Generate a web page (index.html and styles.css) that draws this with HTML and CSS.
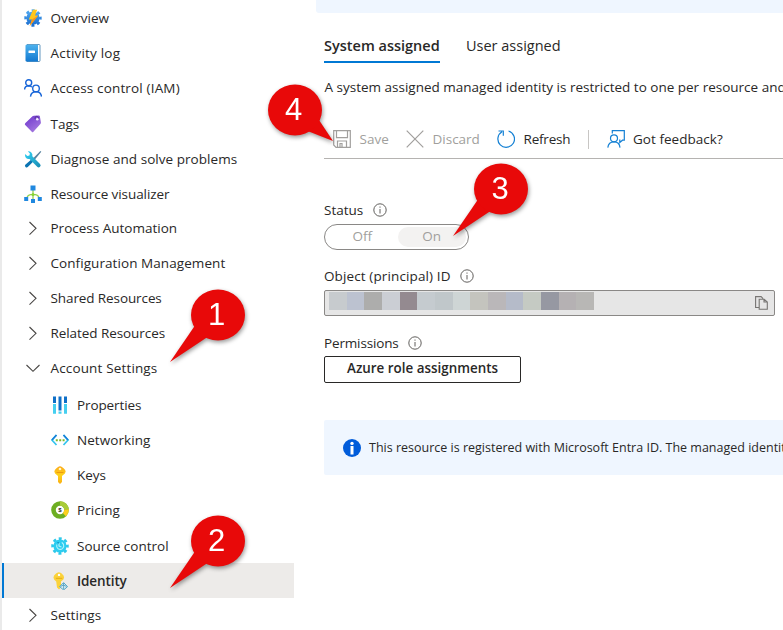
FILE: index.html
```html
<!DOCTYPE html>
<html lang="en">
<head>
<meta charset="utf-8">
<title>Identity</title>
<link rel="stylesheet" href="styles.css">
</head>
<body>
<div class="page">
<nav class="sidebar">
  <ul class="menu">
    <li class="item"><svg class="icon" viewBox="0 0 18 18"><defs><linearGradient id="gear" x1="0" y1="0" x2="0" y2="1"><stop offset="0" stop-color="#4fa8f0"/><stop offset="1" stop-color="#1c6fd0"/></linearGradient></defs><circle cx="9" cy="9" r="7.4" fill="none" stroke="url(#gear)" stroke-width="2.6" stroke-dasharray="3 2.81" stroke-dashoffset="1.5"/><circle cx="9" cy="9" r="6.6" fill="url(#gear)"/><path d="M9 .8h4.2L11 6.4h3.2L5.6 17.2 8 10.400H4.800z" fill="#ffc61a"/><path d="M8 10.400 14.200 6.400 5.600 17.200z" fill="#f9921c"/></svg><span class="t1">Overview</span></li>
    <li class="item"><svg class="icon" viewBox="0 0 18 18"><defs><linearGradient id="book" x1="0" y1="0" x2="0" y2="1"><stop offset="0" stop-color="#4cb2ee"/><stop offset="1" stop-color="#1278d0"/></linearGradient></defs><path d="M3 .5h12q1 0 1 1v15q0 1-1 1H3z" fill="#fff" stroke="#3d7fae" stroke-width=".8"/><path d="M2.500.7H14v16.800H2.500q-1 0-1-1V1.700q0-1 1-1z" fill="url(#book)"/><rect x="4.500" y="6.500" width="6.500" height="2.500" rx=".5" fill="#fff"/></svg><span class="t2">Activity log</span></li>
    <li class="item"><svg class="icon" viewBox="0 0 18 18" fill="none" stroke="#1765d8" stroke-width="1.400"><circle cx="4.700" cy="3.700" r="3"/><path d="M.6 10.500Q.8 6.800 4.700 6.700q2 0 3.200 1.400"/><circle cx="12" cy="9.400" r="3.300"/><path d="M6.500 17.600q.5-4.900 5.500-4.900t5.500 4.900"/></svg><span class="t3">Access control (IAM)</span></li>
    <li class="item"><svg class="icon" viewBox="0 0 18 18"><defs><linearGradient id="tag" x1="0" y1="0" x2=".7" y2="1"><stop offset="0" stop-color="#6b32cc"/><stop offset="1" stop-color="#a67be0"/></linearGradient></defs><path d="M1.200 8.300 8.500 1.300Q9 .8 9.900.8L14.700.6q1 0 1.200 1l1 6q.1.700-.5 1.400l-7.200 8q-.6.600-1.200 0L1.200 10q-.8-.8 0-1.700z" fill="url(#tag)"/><path d="M14.200 4.500q1-3-1.300-3.200T11 4" fill="none" stroke="#552f99" stroke-width=".9"/><circle cx="13.300" cy="4.300" r="1.300" fill="#f2eafe"/></svg><span class="t4">Tags</span></li>
    <li class="item"><svg class="icon" viewBox="0 0 18 18"><defs><linearGradient id="wrench" x1="0" y1="0" x2="1" y2="1"><stop offset="0" stop-color="#32d4f5"/><stop offset="1" stop-color="#198ab3"/></linearGradient></defs><path d="m16.400.900.9.9-7 8.500-1.600-1.600z" fill="#57839e"/><path d="m7.600 9.200 2 2-5.800 5.900q-1.200.9-2.300-.2t-.2-2.200z" fill="#0c74b2"/><path d="m3.800 1.300 2.100 2.200-.5 2-2.100.5L1.200 3.900q-.8 2.400.8 4 1.500 1.400 3.500 1l7.700 7.900q1.400 1.200 2.800 0t0-2.900L8.300 6.300q.6-2.200-1-3.900Q5.700.9 3.800 1.300z" fill="url(#wrench)"/></svg><span class="t5">Diagnose and solve problems</span></li>
    <li class="item"><svg class="icon" viewBox="0 0 18 18"><path d="M9 5v9M3 13q.5-3.600 6-3.600t6 3.600" fill="none" stroke="#92d050" stroke-width="1.300"/><circle cx="9" cy="9.400" r="1.500" fill="#86d633"/><path d="M6.500.5h5v5h-5zM.2 12h4v4h-4zM7 14h4v4H7zM13.800 12h4v4h-4z" fill="#2088df"/></svg><span class="t6">Resource visualizer</span></li>
  </ul>
  <ul class="menu groups">
    <li class="item group"><svg class="icon chev" viewBox="0 0 18 18"><path d="m5.500 3 6.500 6.300-6.500 6.300"/></svg><span class="t7">Process Automation</span></li>
    <li class="item group"><svg class="icon chev" viewBox="0 0 18 18"><path d="m5.500 3 6.500 6.300-6.500 6.300"/></svg><span class="t8">Configuration Management</span></li>
    <li class="item group"><svg class="icon chev" viewBox="0 0 18 18"><path d="m5.500 3 6.500 6.300-6.500 6.300"/></svg><span class="t9">Shared Resources</span></li>
    <li class="item group"><svg class="icon chev" viewBox="0 0 18 18"><path d="m5.500 3 6.500 6.300-6.500 6.300"/></svg><span class="t10">Related Resources</span></li>
    <li class="item group"><svg class="icon chev" viewBox="0 0 18 18"><path d="m2.500 6 6.500 6.300L15.500 6"/></svg><span class="t11">Account Settings</span></li>
  </ul>
  <ul class="menu subs">
    <li class="item"><svg class="icon" viewBox="0 0 18 18"><path d="M2 .5h3v6.500H2zM7.500.5h3v14h-3zM13 .5h3v6.500h-3z" fill="#0f70c8"/><path d="M2 8h3v9.800H2zM7.500 15.500h3v2.300h-3zM13 8h3v9.800h-3z" fill="#45cff0"/></svg><span class="t12">Properties</span></li>
    <li class="item"><svg class="icon" viewBox="0 0 18 18"><path d="M5.500 4 1 9l4.500 5" fill="none" stroke="#35c5ee" stroke-width="1.700"/><path d="M12.500 4 17 9l-4.500 5" fill="none" stroke="#35c5ee" stroke-width="1.700"/><path d="M5.500 4 1 9M12.500 4 17 9" stroke="#1880d8" stroke-width="1.700"/><path d="M4.800 8.300h2v2h-2zM8.200 8.300h2v2h-2zM11.600 8.300h2v2h-2z" fill="#7dbb2d"/></svg><span class="t13">Networking</span></li>
    <li class="item"><svg class="icon" viewBox="0 0 18 18"><defs><linearGradient id="key" x1="0" y1="0" x2="0" y2="1"><stop offset="0" stop-color="#fba919"/><stop offset=".5" stop-color="#ffd21a"/><stop offset="1" stop-color="#f9ae14"/></linearGradient></defs><path d="M9 .3q2 0 5 3.500 1.400 1.800-.1 3.700L11 10v6l-2 2-2-2V10L4.100 7.500q-1.500-1.900-.1-3.700Q7 .3 9 .3z" fill="url(#key)"/><circle cx="9" cy="3" r="1.300" fill="#fff5cf"/><path d="M5.500 6.500h7" stroke="#e98f0b" stroke-width=".8"/></svg><span class="t14">Keys</span></li>
    <li class="item"><svg class="icon" viewBox="0 0 18 18"><circle cx="9" cy="9" r="6.500" fill="#fff" stroke="#6eae22" stroke-width="4.600"/><path d="M9 2.500A6.500 6.500 0 0 1 15.500 8.500" fill="none" stroke="#a9cc38" stroke-width="4.600"/><path d="M15.500 8.500a6.500 6.500 0 0 1-2.100 5.200" fill="none" stroke="#fcd01f" stroke-width="4.600"/><text x="9" y="11.400" class="dollar">$</text></svg><span class="t15">Pricing</span></li>
    <li class="item"><svg class="icon" viewBox="0 0 18 18"><circle cx="9" cy="9" r="7.400" fill="none" stroke="#2fc8ea" stroke-width="2.700" stroke-dasharray="3 2.810" stroke-dashoffset="1.500"/><circle cx="9" cy="9" r="6.600" fill="#2dcdf0"/><path d="M5.800 7.500q-.7 2.600 1.300 4.200 2.200 1.400 4.400-.1 1.900-1.700 1-4.200L10.800 5.400M8 6v3l2.500.9" fill="none" stroke="#b4f2fb" stroke-width="1.100"/><path d="m6 5 2 .3-.5 1.700z" fill="#0b8bc0"/></svg><span class="t16">Source control</span></li>
    <li class="item selected"><svg class="icon" viewBox="0 0 18 18"><path d="M8 .3q2 0 4.500 3.300 1.300 1.900-.1 3.800L10 9.600v6l-2 2-2-2-.8-6L3.100 7.400Q1.800 5.500 3.100 3.600 6 .3 8 .3z" fill="#fbd23a"/><circle cx="8" cy="2.900" r="1.200" fill="#fff"/><path d="M4.800 6.300h6.500" stroke="#e5ac19"/><path d="m12.600 10.600 4 4-4 3.400-4-3.400z" fill="#d5eaf1" stroke="#55a7c8"/><path d="M12.600 11v6.500M9.500 14.500l3-1.500 3 1.500" stroke="#4799bd" stroke-width=".8" fill="none"/></svg><span class="t17">Identity</span></li>
  </ul>
  <ul class="menu last">
    <li class="item group"><svg class="icon chev" viewBox="0 0 18 18"><path d="m5.500 3 6.500 6.300-6.500 6.300"/></svg><span class="t18">Settings</span></li>
  </ul>
</nav>
<main class="main">
  <div class="top-banner"></div>
  <div class="tabs"><div class="tab active"><span class="m1">System assigned</span></div><div class="tab"><span class="m2">User assigned</span></div></div>
  <p class="description"><span class="m3">A system assigned managed identity is restricted to one per resource and</span></p>
  <div class="toolbar">
    <div class="command disabled save"><svg class="tool" viewBox="0 0 18 18"><path d="M.7.700h16.600v16.600H3L.7 15z"/><path d="M3.500.7v7h11v-7M4.500 17v-6h9v6M7 17v-3.500h2V17"/></svg><span class="m4">Save</span></div>
    <div class="command disabled discard"><svg class="tool" viewBox="0 0 18 18"><path d="m.7.700 16.600 16.600M17.300.7.7 17.300"/></svg><span class="m5">Discard</span></div>
    <div class="command refresh"><svg class="tool" viewBox="0 0 18 18"><path d="M11.500 1A8.300 8.300 0 1 1 5 1.800M1.500 1h4.800v4.800"/></svg><span class="m6">Refresh</span></div>
    <div class="divider"></div>
    <div class="command"><svg class="tool" viewBox="0 0 18 18"><circle cx="7" cy="8.300" r="3.500"/><path d="M.8 17.600q.7-5.800 6.200-5.800t6 5.800M5.300 3.500V.7h12v9.500h-1.800L12.800 12.500v-3"/></svg><span class="m7">Got feedback?</span></div>
  </div>
  <div class="label status"><span class="m8">Status</span><svg class="info" viewBox="0 0 14 14"><circle cx="7" cy="7" r="6.200"/><path d="M7 6v4.500M7 3.500v1.200"/></svg></div>
  <div class="toggle"><span class="option">Off</span><span class="option on">On</span></div>
  <div class="label object"><span class="m9">Object (principal) ID</span><svg class="info" viewBox="0 0 14 14"><circle cx="7" cy="7" r="6.200"/><path d="M7 6v4.500M7 3.500v1.200"/></svg></div>
  <div class="field"><div class="redacted"><i class="c1"></i><i class="c2"></i><i class="c3"></i><i class="c4"></i><i class="c5"></i><i class="c6"></i><i class="c7"></i><i class="c8"></i><i class="c9"></i><i class="c10"></i><i class="c11"></i><i class="c12"></i><i class="c13"></i><i class="c14"></i><i class="c15"></i></div><svg class="copy" viewBox="0 0 13 14"><path d="M4 11.500H.6V.6h5.500l2 2M4.200 3.200h5L12.300 6v7.300H4.200zM9 3.200V6h3.300"/></svg></div>
  <div class="label permissions"><span class="m10">Permissions</span><svg class="info" viewBox="0 0 14 14"><circle cx="7" cy="7" r="6.200"/><path d="M7 6v4.500M7 3.500v1.200"/></svg></div>
  <button class="button"><span class="m11">Azure role assignments</span></button>
  <div class="notice"><svg class="notice-icon" viewBox="0 0 18 18"><circle cx="9" cy="9" r="9" fill="#015cda"/><rect x="7.500" y="7" width="3" height="8.500" fill="#fff"/><circle cx="9" cy="4.400" r="1.700" fill="#fff"/></svg><span class="m12">This resource is registered with Microsoft Entra ID. The managed identity</span></div>
</main>
<svg class="callout one" viewBox="0 0 90 90"><path d="m30 38-26 38 42-28z"/><ellipse cx="52" cy="29" rx="27" ry="25.500"/><text x="50.500" y="39">1</text></svg>
<svg class="callout two" viewBox="0 0 90 90"><path d="m30 38-26 38 42-28z"/><ellipse cx="52" cy="29" rx="27" ry="25.500"/><text x="50.500" y="39">2</text></svg>
<svg class="callout three" viewBox="0 0 90 90"><path d="m30 38-26 38 42-28z"/><ellipse cx="52" cy="29" rx="27" ry="25.500"/><text x="51" y="39">3</text></svg>
<svg class="callout four" viewBox="0 0 90 90"><path d="m53 37 16 24-28-11z"/><ellipse cx="31" cy="30" rx="27" ry="25.500"/><text x="29.500" y="40">4</text></svg>
</div>
</body>
</html>
```
FILE: styles.css
```css
* { box-sizing: border-box; }
body { margin: 0; background: #fff; color: #292827; font: 13.5px/20px "Open Sans", "Noto Sans", sans-serif; }
.page { position: relative; display: flex; width: 783px; height: 630px; overflow: hidden; }
.sidebar { width: 294px; flex: none; border-left: 2px solid #eaeaea; padding-top: .4px; }
.menu { list-style: none; margin: 0; padding: 0; }
.item { display: flex; align-items: center; gap: 8.500px; height: 35.2px; padding-left: 22px; white-space: nowrap; }
.group { height: 35px; }
.groups { margin-top: -.6px; }
.subs { margin-top: 1.400px; }
.subs .item { padding-left: 48.500px; }
.last { margin-top: -1px; }
.icon { width: 18px; height: 18px; flex: none; }
.chev { fill: none; stroke: #484644; stroke-width: 1.100; }
.dollar { font: bold 6px "Liberation Sans", sans-serif; text-anchor: middle; fill: #222; }
.subs .selected { background: #edebe9; border-left: 2px solid #0078d4; padding-left: 46.500px; font-weight: 600; letter-spacing: -.1px; }
.t2 { letter-spacing: .2px; }
.t3 { letter-spacing: .16px; }
.t5 { letter-spacing: .05px; }
.t6 { letter-spacing: -.08px; }
.t8 { letter-spacing: .07px; }
.t9 { letter-spacing: -.1px; }
.t10 { letter-spacing: -.07px; }
.t11 { letter-spacing: .15px; }
.t12 { letter-spacing: -.1px; }
.t13 { letter-spacing: .06px; }
.t15 { letter-spacing: .05px; }
.t18 { letter-spacing: .08px; }
.main { flex: 1; min-width: 0; padding-left: 30px; white-space: nowrap; }
.top-banner { height: 13px; margin-left: -8px; background: #eff6ff; border-bottom-left-radius: 3px; }
.tabs { display: flex; gap: 26px; height: 50px; padding-top: 20px; font-size: 14.500px; }
.tab { padding-top: 3px; height: 30px; }
.active { width: 116px; font-weight: 600; border-bottom: 2px solid #0078d4; }
.description { margin: 14px 0 0; height: 20px; }
.m3 { margin-left: .5px; }
.toolbar { display: flex; align-items: center; height: 39px; margin-top: 23px; padding-left: 9px; border-bottom: 1px solid #b5b3b1; }
.command { display: flex; align-items: center; gap: 8.500px; }
.save { width: 73px; }
.discard { width: 91px; }
.refresh { width: 91px; }
.disabled { color: #a19f9d; }
.m6 { letter-spacing: -.2px; }
.m7 { letter-spacing: .03px; }
.tool { width: 18px; height: 18px; flex: none; fill: none; stroke: #1480d4; stroke-width: 1.200; }
.disabled .tool { stroke: #a19f9d; }
.divider { width: 1px; height: 19px; background: #c8c6c4; margin-right: 17.500px; }
.label { display: flex; align-items: center; gap: 9.500px; height: 20px; }
.m9 { letter-spacing: .12px; }
.m10 { letter-spacing: -.15px; }
.info { width: 14px; height: 14px; fill: none; stroke: #605e5c; stroke-width: 1; }
.status { margin-top: 41px; }
.toggle { display: flex; width: 145px; height: 26px; margin-top: 4px; padding: 2px; border: 1px solid #8a8886; border-radius: 13px; color: #a19f9d; }
.option { width: 71px; text-align: center; line-height: 18px; height: 20px; border-radius: 10px; }
.on { background: #f3f2f1; width: 69px; }
.object { margin-top: 16px; }
.field { display: flex; justify-content: space-between; width: 451px; height: 26px; margin-top: 4px; padding: 1px 6px 0 4px; border: 1px solid #8a8886; border-radius: 2px; background: #e6e6e6; }
.redacted { display: flex; height: 18px; }
.redacted i { width: 17.670px; }
.c1 { background: #c7cbce; } .c2 { background: #bcc2d0; } .c3 { background: #adadac; }
.c4 { background: #cbced4; } .c5 { background: #948a90; } .c6 { background: #c5cbcf; }
.c7 { background: #c0c7ca; } .c8 { background: #ced5d5; } .c9 { background: #c4c4be; }
.c10 { background: #bab7b9; } .c11 { background: #b5bbc9; } .c12 { background: #c5cac3; }
.c13 { background: #9698a2; } .c14 { background: #b5b1b3; } .c15 { background: #b8b7b5; }
.copy { width: 13px; height: 14px; margin-top: 4px; fill: none; stroke: #777573; stroke-width: 1.100; }
.permissions { margin-top: 17px; }
.button { display: block; width: 197px; height: 27px; margin: 3px 0 0; padding: 0 0 3px; border: 1px solid #292827; border-radius: 2px; background: #fff; color: #292827; font: 600 13.400px/20px "Open Sans", sans-serif; }
.notice { display: flex; align-items: center; gap: 8px; height: 55px; margin-top: 37px; padding-left: 19px; border-radius: 2px 0 0 2px; background: #eff6ff; font-size: 12.500px; }
.notice-icon { width: 18px; height: 18px; flex: none; }
.callout { position: absolute; width: 90px; height: 90px; fill: #e80909; filter: drop-shadow(1px 2px 2px rgba(0, 0, 0, .4)); }
.callout text { font: 31px "Liberation Sans", sans-serif; fill: #fff; text-anchor: middle; }
.one { left: 166px; top: 286px; }
.two { left: 166px; top: 512px; }
.three { left: 449px; top: 160px; }
.four { left: 264px; top: 80px; }
```
